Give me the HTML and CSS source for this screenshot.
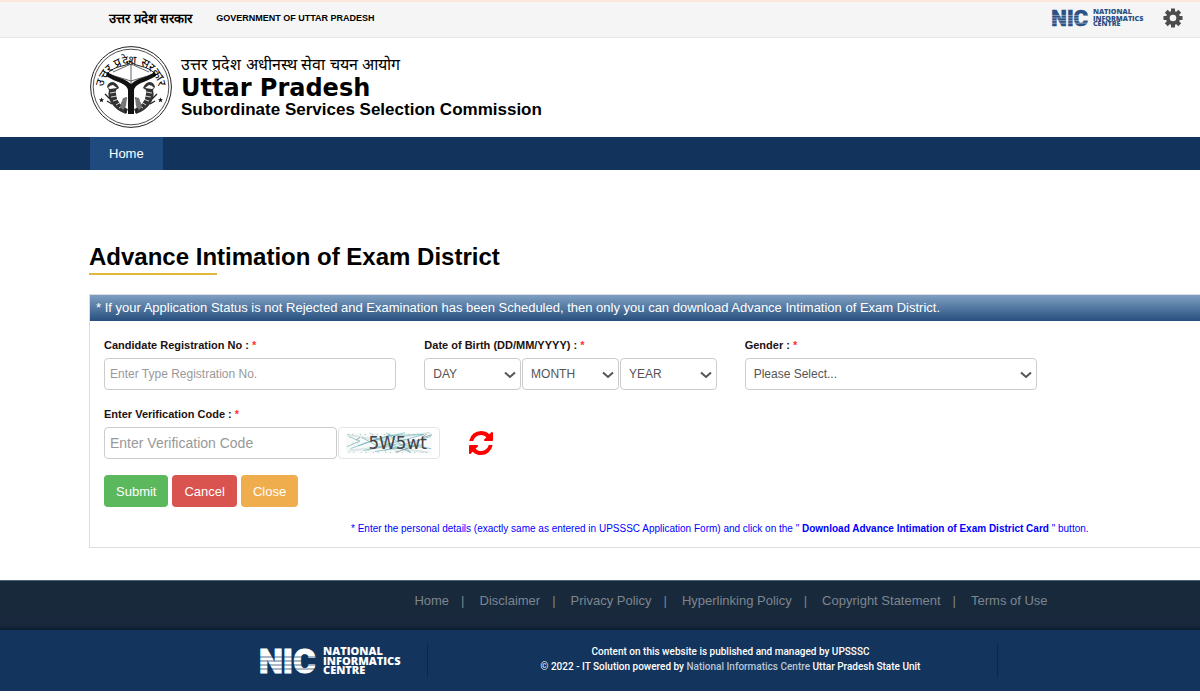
FILE: index.html
```html
<!DOCTYPE html>
<html lang="en">
<head>
<meta charset="utf-8">
<meta name="viewport" content="width=device-width, initial-scale=1">
<title>Advance Intimation of Exam District</title>
<link rel="stylesheet" href="styles.css">
</head>
<body>
<div class="topbar">
  <span class="topbar-hindi" lang="hi">उत्तर प्रदेश सरकार</span>
  <span class="topbar-gov">GOVERNMENT OF UTTAR PRADESH</span>
  <a class="topbar-nic" href="#">
    <svg class="nic nic-small" viewBox="0 0 146 30">
      <text class="nic-mark" x="-1" y="27">NIC</text>
      <path class="nic-stripes" d="M0 11H58M0 15H58M0 19H58M0 23H58"/>
      <text class="nic-name" x="63" y="9">NATIONAL</text>
      <text class="nic-name" x="63" y="19">INFORMATICS</text>
      <text class="nic-name" x="63" y="28">CENTRE</text>
    </svg>
  </a>
  <button class="gear" type="button" aria-label="Settings">
    <svg viewBox="-10 -10 20 20" width="20" height="20">
      <g fill="#4c4c4c">
        <path d="M-2 -9.500H2V9.500H-2Z"/>
        <path d="M-2 -9.500H2V9.500H-2Z" transform="rotate(45)"/>
        <path d="M-2 -9.500H2V9.500H-2Z" transform="rotate(90)"/>
        <path d="M-2 -9.500H2V9.500H-2Z" transform="rotate(135)"/>
        <circle r="7"/>
      </g>
      <circle r="3.300" fill="#f5f5f5"/>
    </svg>
  </button>
</div>

<header class="header">
  <svg class="emblem" viewBox="0 0 82 82" role="img" aria-label="Government of Uttar Pradesh emblem">
    <g fill="none" stroke="#222">
      <circle cx="41" cy="41" r="40.400" stroke-width="1"/>
      <circle cx="41" cy="41" r="37.800" stroke-width=".8"/>
      <path d="M17 28Q22 22 32 20Q38 19 41 16Q44 19 50 20Q60 22 65 28" stroke-width="1"/>
      <path d="M18 28L41 35L64 28M41 15V38M23 26L41 18L59 26" stroke-width=".7"/>
    </g>
    <circle cx="41" cy="17" r="1.800" fill="#fff" stroke="#222" stroke-width=".8"/>
    <path d="M17 26Q25 31 33 33Q38 35 41 38Q44 35 49 33Q57 31 65 26L66 30Q57 35 51 37Q44 40 44 45L44 68H38L38 45Q38 40 31 37Q24 35 16 30Z" fill="#111"/>
    <g id="fish">
      <path d="M17 41Q18 36 23 36Q27 37 29 42L26 44Q25 53 32 60Q34 62 38 63L36 68Q27 65 22 58Q17 51 19 44Z" fill="#333"/>
      <path d="M18 42Q20 39 23 39L27 42L20 43Z" fill="#fff"/>
      <path d="M20 47L26 46M21 51L27 50M23 55L29 53M26 59L31 56M29 62L34 59" stroke="#fff" stroke-width=".8"/>
      <path d="M15 48L20 53M17 55L22 58M37 52Q31 55 32 61Q35 58 36 67" fill="none" stroke="#222" stroke-width="1.300"/>
      <path d="M33 52L37 51L36 60L33 64L30 61Z" fill="#777"/>
    </g>
    <use href="#fish" transform="matrix(-1 0 0 1 82 0)"/>
    <path id="star" d="M11.500 51.500L12.200 53.300H14L12.600 54.500L13.200 56.300L11.500 55.200L9.800 56.300L10.400 54.500L9 53.300H10.800Z" fill="#111"/>
    <use href="#star" transform="matrix(-1 0 0 1 82 0)"/>
    <path id="arc" d="M13 46A28 28 0 1 1 69 46" fill="none"/>
    <text class="emblem-text" lang="hi" text-anchor="middle"><textPath href="#arc" startOffset="50%">उत्तर प्रदेश सरकार</textPath></text>
  </svg>
  <div class="titles">
    <p class="title-hindi" lang="hi">उत्तर प्रदेश अधीनस्थ सेवा चयन आयोग</p>
    <p class="title-state">Uttar Pradesh</p>
    <p class="title-sub">Subordinate Services Selection Commission</p>
  </div>
</header>

<nav class="nav"><a class="nav-link" href="#">Home</a></nav>

<main class="main">
  <h1 class="heading">Advance Intimation of Exam District</h1>
  <form class="panel">
    <p class="notice">* If your Application Status is not Rejected and Examination has been Scheduled, then only you can download Advance Intimation of Exam District.</p>
    <div class="fields">
      <div class="field">
        <label class="label" for="reg">Candidate Registration No : <span class="star">*</span></label>
        <input class="control" id="reg" type="text" placeholder="Enter Type Registration No.">
      </div>
      <div class="field">
        <label class="label" for="day">Date of Birth (DD/MM/YYYY) : <span class="star">*</span></label>
        <div class="dates">
          <div class="pick"><select class="control" id="day"><option>DAY</option></select><svg class="chevron" viewBox="0 0 12 8"><path d="M1 1.500L6 6L11 1.500"/></svg></div>
          <div class="pick"><select class="control" aria-label="Month"><option>MONTH</option></select><svg class="chevron" viewBox="0 0 12 8"><path d="M1 1.500L6 6L11 1.500"/></svg></div>
          <div class="pick"><select class="control" aria-label="Year"><option>YEAR</option></select><svg class="chevron" viewBox="0 0 12 8"><path d="M1 1.500L6 6L11 1.500"/></svg></div>
        </div>
      </div>
      <div class="field">
        <label class="label" for="gender">Gender : <span class="star">*</span></label>
        <div class="pick"><select class="control" id="gender"><option>Please Select...</option></select><svg class="chevron" viewBox="0 0 12 8"><path d="M1 1.500L6 6L11 1.500"/></svg></div>
      </div>
    </div>
    <div class="verify">
      <label class="label" for="code">Enter Verification Code : <span class="star">*</span></label>
      <div class="verify-row">
        <input class="control code" id="code" type="text" placeholder="Enter Verification Code">
        <svg class="captcha" viewBox="0 0 102 32" role="img" aria-label="Verification code">
          <path d="M5 5H97V27H5Z" fill="#f7faf9"/>
          <path d="M6 7L40 13L95 5M8 24L50 20L92 26M30 5L60 25M50 6L92 22M62 7L28 24" fill="none" stroke="#dbe6e6" stroke-width="2"/>
          <path d="M8 9L20 14L6 20M18 19L50 8L88 7L40 20L22 10M24 24L60 17L96 22M32 9L74 26L48 5M46 24L96 9M10 22L34 13L68 5M36 25L86 18" fill="none" stroke="#65aeb9" stroke-width=".7"/>
          <path d="M58 26L76 20L90 7M88 10L97 7M20 10L16 13" fill="none" stroke="#7d8c8f" stroke-width=".8"/>
          <path d="M8 26H94M7 7H94M12 16H28" stroke="#a9b8b5" stroke-width="1" stroke-dasharray="1 4 1 7"/>
          <text class="captcha-text" x="29" y="22">5W5wt</text>
        </svg>
        <button class="refresh" type="button" aria-label="Refresh code">
          <svg viewBox="0 0 1536 1536" width="24" height="24"><path fill="#f00" d="M1511 928q0 5-1 7-64 268-268 434.500t-478 166.500q-146 0-282.500-55t-243.500-157l-129 129q-19 19-45 19t-45-19-19-45v-448q0-26 19-45t45-19h448q26 0 45 19t19 45-19 45l-137 137q71 66 161 102t187 36q134 0 250-65t186-179q11-17 53-117 8-23 30-23h192q13 0 22.500 9.500t9.500 22.500zm25-800v448q0 26-19 45t-45 19h-448q-26 0-45-19t-19-45 19-45l138-138q-148-137-349-137-134 0-250 65t-186 179q-11 17-53 117-8 23-30 23h-199q-13 0-22.500-9.500t-9.500-22.500v-7q65-268 270-434.500t480-166.500q146 0 284 55.500t245 156.500l130-129q19-19 45-19t45 19 19 45z"/></svg>
        </button>
      </div>
    </div>
    <div class="actions">
      <button class="btn btn-submit" type="submit">Submit</button>
      <button class="btn btn-cancel" type="reset">Cancel</button>
      <button class="btn btn-close" type="button">Close</button>
    </div>
    <p class="hint">* Enter the personal details (exactly same as entered in UPSSSC Application Form) and click on the " <b>Download Advance Intimation of Exam District Card</b> " button.</p>
  </form>
</main>

<footer class="footer">
  <div class="footer-links">
    <a href="#">Home</a><span>|</span><a href="#">Disclaimer</a><span>|</span><a href="#">Privacy Policy</a><span>|</span><a href="#">Hyperlinking Policy</a><span>|</span><a href="#">Copyright Statement</a><span>|</span><a href="#">Terms of Use</a>
  </div>
  <div class="footer-info">
    <a class="footer-nic" href="#">
      <svg class="nic nic-large" viewBox="0 0 146 30">
        <text class="nic-mark" x="-1" y="27">NIC</text>
        <path class="nic-stripes" d="M0 11H58M0 15H58M0 19H58M0 23H58"/>
        <text class="nic-name" x="63" y="9">NATIONAL</text>
        <text class="nic-name" x="63" y="19">INFORMATICS</text>
        <text class="nic-name" x="63" y="28">CENTRE</text>
      </svg>
    </a>
    <p class="credits">Content on this website is published and managed by UPSSSC<br>© 2022 - IT Solution powered by <a href="#">National Informatics Centre</a> Uttar Pradesh State Unit</p>
  </div>
</footer>
</body>
</html>
```
FILE: styles.css
```css
* { box-sizing: border-box; }

body {
  margin: 0;
  background: #fff;
  color: #000;
  font-family: "Liberation Sans", Arial, sans-serif;
  font-size: 13px;
  overflow-x: hidden;
}

p, h1 { margin: 0; }
a { color: inherit; text-decoration: none; }
button { border: 0; padding: 0; background: none; font: inherit; cursor: pointer; }

.topbar {
  display: flex;
  align-items: center;
  height: 38px;
  padding: 0 17px 4px 109px;
  background: #f5f5f5;
  border-top: 2px solid #fbe6dc;
  border-bottom: 1px solid #e9e9e9;
}
.topbar-hindi { font-size: 13px; font-weight: bold; margin-right: 24px; }
.topbar-gov { font-size: 9px; font-weight: bold; }
.topbar-nic { display: flex; margin-left: auto; color: #2b5084; --stripe: #f5f5f5; }
.gear { display: flex; margin-left: 16px; }

.nic { fill: currentColor; overflow: visible; }
.nic-small { width: 95px; height: 20px; }
.nic-large { width: 146px; height: 30px; }
.nic-mark { font: 900 34px Roboto, sans-serif; stroke: currentColor; stroke-width: 1; }
.nic-name { font: 800 11px "Open Sans", sans-serif; }
.nic-stripes { stroke: var(--stripe); stroke-width: 1; opacity: .7; }

.header { display: flex; align-items: center; gap: 9px; height: 99px; padding: 0 0 1px 90px; }
.emblem { width: 82px; height: 82px; }
.emblem-text { font-size: 12px; font-weight: 500; }
.title-hindi { font-size: 16px; line-height: 22px; }
.title-state { font: bold 24px/24px "DejaVu Sans", sans-serif; }
.title-sub { font-size: 17px; font-weight: bold; line-height: 20px; }

.nav { display: flex; padding-left: 90px; background: #12335b; color: #fff; }
.nav-link { padding: 0 19px; background: #1f4a7d; line-height: 33px; }

.main { padding: 71px 0 32px 89px; }
.heading { position: relative; padding-bottom: 2px; font-size: 24px; line-height: 32px; }
.heading::after { content: ""; position: absolute; left: 0; bottom: 0; width: 128px; height: 2px; background: #dfb73f; }

.panel { margin-top: 19px; border: 1px solid #ddd; border-right: 0; padding-bottom: 10px; }
.notice {
  padding-left: 6px;
  line-height: 26px;
  background: linear-gradient(#7f9fc2, #27507f);
  color: #fff;
}
.fields {
  display: grid;
  grid-template-columns: repeat(3, 1fr);
  gap: 28px;
  padding: 14px 163px 0 14px;
}
.label { display: block; font-size: 11px; font-weight: bold; line-height: 20px; margin-bottom: 3px; color: #211; }
.star { color: #f33; }
.control {
  display: block;
  width: 100%;
  height: 32px;
  padding: 0 5px;
  border: 1px solid #ccc;
  border-radius: 4px;
  background: #fff;
  color: #555;
  font: inherit;
  font-size: 12px;
  appearance: none;
}
.control::placeholder { color: #999; }
.dates { display: grid; grid-template-columns: repeat(3, 1fr); gap: 1px; }
.pick { position: relative; }
.pick .control { padding: 0 8px; }
.chevron { position: absolute; right: 5px; top: 13px; width: 12px; height: 8px; fill: none; stroke: #555; stroke-width: 2; pointer-events: none; }

.verify { padding: 14px 14px 0; }
.verify-row { display: flex; align-items: center; gap: 1px; }
.code { width: 233px; font-size: 14px; }
.captcha { width: 102px; height: 32px; border: 1px solid #e4e4e4; border-radius: 4px; }
.captcha-text { font: 18px "DejaVu Sans", sans-serif; fill: #444; }
.refresh { display: flex; margin-left: 28px; }

.actions { display: flex; gap: 4px; padding: 16px 14px 0; }
.btn { height: 32px; padding: 0 12px; border-radius: 4px; color: #fff; font-size: 13px; }
.btn-submit { background: #5cb85c; }
.btn-cancel { background: #d9534f; }
.btn-close { background: #f0ad4e; }

.hint { margin-top: 14px; padding-left: 261px; font-size: 10px; line-height: 16px; color: #00f; }

.footer-links {
  display: flex;
  justify-content: center;
  height: 50px;
  padding-left: 262px;
  background: linear-gradient(#172a3b, #19283c 90%, #0d1d2f);
  border-top: 1px solid #4e6270;
  color: #7d868f;
  line-height: 40px;
}
.footer-links span { margin: 0 15px 0 12px; }
.footer-info {
  display: grid;
  grid-template-columns: 168px 570px 1fr;
  align-items: center;
  height: 61px;
  padding-left: 260px;
  background: #13345c;
  color: #fff;
}
.footer-nic { display: flex; align-items: center; height: 34px; border-right: 1px solid #0d2748; --stripe: #13345c; }
.credits { border-right: 1px solid #0d2748; height: 34px; font: 500 10px/15px Roboto, sans-serif; text-align: center; padding-left: 36px; }
.credits a { color: #b9c6d6; }
```
